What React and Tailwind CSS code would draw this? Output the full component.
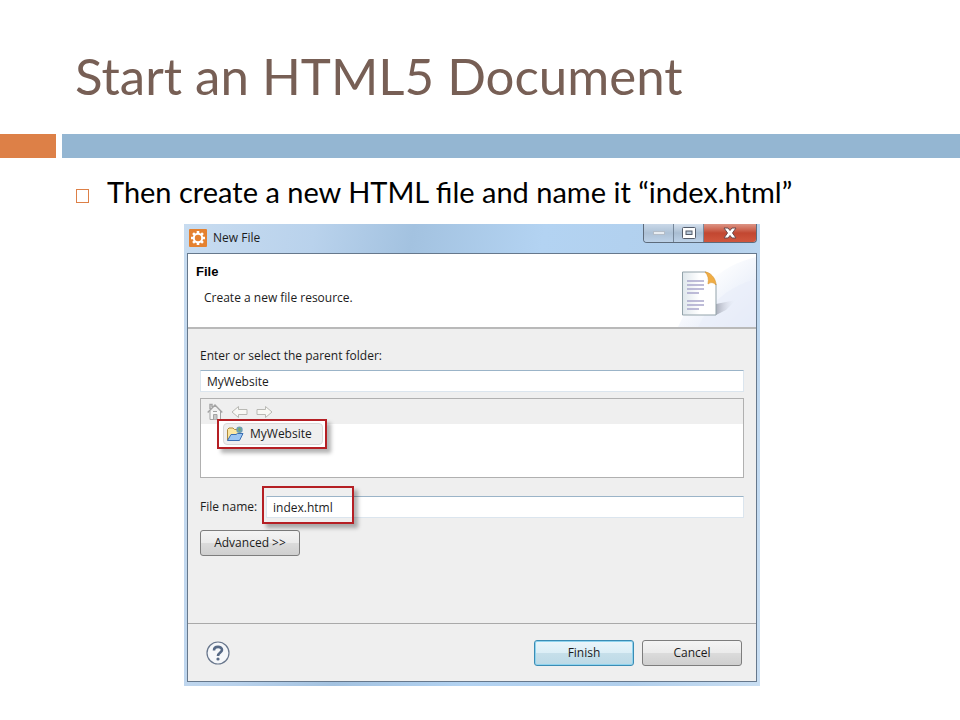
import React, { useState } from 'react';

function GearIcon() {
  return (
    <svg className="h-[18px] w-[18px]" viewBox="0 0 18 18" aria-hidden="true">
      <rect width="18" height="18" rx="1" fill="#e5812f" />
      <path d="M9 2V16M2 9H16M4.050 4.050L13.950 13.950M13.950 4.050L4.050 13.950" stroke="#fff" strokeWidth="2.600" />
      <circle cx="9" cy="9" r="5.200" fill="#fff" />
      <circle cx="9" cy="9" r="3.200" fill="#e5812f" />
    </svg>
  );
}

function PageArt() {
  return (
    <svg className="h-[73px] w-[130px]" viewBox="0 0 130 73" aria-hidden="true">
      <defs>
        <linearGradient id="sky" x1="0" y1="0" x2="1" y2="1">
          <stop offset="0.3" stopColor="#fff" />
          <stop offset="1" stopColor="#dbe4f6" />
        </linearGradient>
        <linearGradient id="sheet" x1="0" y1="0" x2="1" y2="0">
          <stop offset="0" stopColor="#dfe7ec" />
          <stop offset="0.5" stopColor="#fff" />
        </linearGradient>
        <linearGradient id="shade" x1="0" y1="0" x2="1" y2="0">
          <stop offset="0" stopColor="#a9adba" />
          <stop offset="1" stopColor="#e8ecf6" stopOpacity="0" />
        </linearGradient>
      </defs>
      <path d="M52 73C68 38 92 12 130 3V73Z" fill="url(#sky)" />
      <path d="M72 73C84 48 104 32 130 25V73Z" fill="#e9eefa" opacity="0.7" />
      <path d="M90 50L110 46L100 56L90 61Z" fill="url(#shade)" />
      <path d="M56.500 18H80L90 30V61H56.500Z" fill="url(#sheet)" stroke="#93a3aa" />
      <path d="M79 18C84 18 90 24 90 31C87 28 85 28 82 30C83 25 82 21 79 18Z" fill="#f0ad45" stroke="#d9962f" strokeWidth="0.6" />
      <path d="M61 27H78M61 31H78M61 35H78M61 39H73M61 47H78M61 51H78M61 55H73" stroke="#a9a6cc" strokeWidth="1.6" />
    </svg>
  );
}

function HomeIcon() {
  return (
    <svg className="h-[18px] w-4" viewBox="0 0 16 18" fill="none" stroke="#a3a3a3" aria-hidden="true">
      <path d="M3 8V16.500H13.500V8" fill="#f7f7f7" />
      <path d="M3 6V1.500H5V4M0.700 9.500L8 2L15.300 9.500" strokeWidth="1.400" />
      <path d="M6.500 16.500V11.500H10V16.500M6 8.500H10" fill="#c8c8c8" />
    </svg>
  );
}

function ArrowIcon({ flip }) {
  return (
    <svg className={`h-3.5 w-[17px] ${flip ? '-scale-x-100' : ''}`} viewBox="0 0 17 14" aria-hidden="true">
      <path d="M1 7L7.500 1.500V4.500H16V9.500H7.500V12.500Z" fill="#f8f8f4" stroke="#b9b9b4" strokeLinejoin="round" />
    </svg>
  );
}

function FolderIcon() {
  return (
    <svg className="h-4 w-[18px]" viewBox="0 0 18 16" aria-hidden="true">
      <path d="M1.500 14V3.500L3 2H7L8.500 3.500H14V13Z" fill="#fbe7a2" stroke="#b08b3c" />
      <circle cx="13.500" cy="3.800" r="3.200" fill="#6d9fb5" />
      <path d="M12 2.500L14 1.500L15 4L13 5.500Z" fill="#79ab6a" />
      <path d="M1.500 14.500L5 8.500H10L11.500 7.500H17L13.500 14.500Z" fill="#9cc6f3" stroke="#3a6fb4" />
    </svg>
  );
}

function TitleBar() {
  return (
    <div className="relative flex h-[29px] items-start justify-between overflow-hidden">
      {/* Glass smudges from the window behind */}
      <svg className="absolute top-0 left-0 h-full w-full" preserveAspectRatio="none" viewBox="0 0 570 29" aria-hidden="true">
        <defs>
          <filter id="soft" x="-20%" y="-200%" width="140%" height="500%">
            <feGaussianBlur stdDeviation="2" />
          </filter>
        </defs>
        <path d="M36 0H50M62 0H72M92 0H104M118 0H128M188 0H202M210 0H220M230 0H242M252 0H262" stroke="#6f8698" strokeWidth="4" opacity="0.5" filter="url(#soft)" />
      </svg>
      <div className="relative flex h-[27px] items-center gap-1.5 pl-0.5">
        <GearIcon />
        <span className="text-xs leading-4">New File</span>
      </div>
      <div className="relative flex h-[19px] overflow-hidden rounded-b border border-t-0 border-[#5d6b7b]">
        <button type="button" aria-label="Minimize" className="flex w-[30px] items-center justify-center border-r border-[#76879a] bg-linear-to-b from-[#c9d8e8] via-[#adc1d6] to-[#bdd2e8]">
          <span className="h-1 w-3 border border-[#b4bdc8] bg-[#e8edf2]" />
        </button>
        <button type="button" aria-label="Maximize" className="flex w-[30px] items-center justify-center border-r border-[#76879a] bg-linear-to-b from-[#d5e1ee] via-[#a9bdd2] to-[#bdd2e8]">
          <svg className="h-3 w-[14px]" viewBox="0 0 14 12" aria-hidden="true">
            <rect x="0.500" y="0.500" width="13" height="11" rx="1" fill="#fff" stroke="#555d6b" />
            <rect x="4" y="4" width="6" height="3.500" fill="#b9c9da" stroke="#555d6b" />
          </svg>
        </button>
        <button type="button" aria-label="Close" className="flex w-[52px] items-center justify-center bg-linear-to-b from-[#dc9485] via-[#c24731] to-[#d0563d]">
          <svg className="h-3 w-3.5" viewBox="0 0 14 12" aria-hidden="true">
            <path d="M1 1H5L7 3.500L9 1H13L9.500 6L13 11H9L7 8.500L5 11H1L4.500 6Z" fill="#fff" stroke="#6a4a4d" />
          </svg>
        </button>
      </div>
    </div>
  );
}

const buttonBase = 'h-[26px] w-[100px] rounded-[3px] border text-xs leading-4';
const greyButton = 'border-[#7d7d7d] bg-[linear-gradient(#f4f4f4_0%,#ebebeb_48%,#dbdbdb_52%,#cfcfcf_100%)]';
const inputBase = 'h-[22px] w-full border border-[#dbe5ee] border-t-[#9bb4c8] bg-white px-1.5 text-xs leading-4 outline-none';
const callout = 'border-2 border-[#b51f24] shadow-[4px_4px_4px_rgba(0,0,0,0.3)]';

function NewFileDialog() {
  const [folder, setFolder] = useState('MyWebsite');
  const [fileName, setFileName] = useState('index.html');

  return (
    <section
      aria-label="New File"
      className="w-3/5 shrink-0 bg-[linear-gradient(100deg,#c8dcf0_0%,#b9d2ec_20%,#a3c2e0_35%,#b3d3f2_55%,#b1cfec_80%,#c9def2_100%)] px-[3px] pb-1 font-['Open_Sans','Noto_Sans',sans-serif] text-[#1c1c1c]"
    >
      <TitleBar />
      <form onSubmit={(e) => e.preventDefault()} className="border border-[#66788c] bg-[#efefef]">
        {/* Wizard header */}
        <div className="flex h-[75px] justify-between border-b-2 border-[#b9b9b9] bg-white">
          <div className="pt-2.5 pl-2">
            <h2 className="font-['Liberation_Sans',Arial,sans-serif] text-[13px] leading-4 font-bold text-black">File</h2>
            <p className="mt-2.5 pl-2 text-xs leading-4">Create a new file resource.</p>
          </div>
          <PageArt />
        </div>

        {/* Fields */}
        <div className="h-[294px] px-3 pt-[19px]">
          <label htmlFor="folder" className="block text-xs leading-4">Enter or select the parent folder:</label>
          <input id="folder" value={folder} onChange={(e) => setFolder(e.target.value)} className={`mt-1.5 block ${inputBase}`} />

          <div className="relative mt-1.5 h-20 border border-[#b0b0b0] bg-white">
            <div className="flex h-[25px] items-center gap-2 bg-[#efefef] pl-1.5">
              <button type="button" aria-label="Home"><HomeIcon /></button>
              <button type="button" aria-label="Back"><ArrowIcon /></button>
              <button type="button" aria-label="Forward"><ArrowIcon flip /></button>
            </div>
            <div className={`absolute top-5 left-4 bg-white p-0.5 pl-1 ${callout}`}>
              <button type="button" className="flex h-[22px] w-[100px] items-center gap-1.5 rounded-sm border border-[#d9d9d9] bg-[#efefef] pl-0.5 text-xs leading-4">
                <FolderIcon />
                MyWebsite
              </button>
            </div>
          </div>

          <div className="mt-[18px] flex items-center">
            <label htmlFor="file-name" className="w-[66px] shrink-0 text-xs leading-4">File name:</label>
            <div className="relative flex-1">
              <input id="file-name" value={fileName} onChange={(e) => setFileName(e.target.value)} className={`block ${inputBase}`} />
              <span className={`pointer-events-none absolute -top-2.5 -left-1 h-[38px] w-[92px] ${callout}`} />
            </div>
          </div>

          <button type="button" className={`mt-3 ${buttonBase} ${greyButton}`}>Advanced &gt;&gt;</button>
        </div>

        {/* Footer */}
        <div className="flex h-[58px] items-center justify-between border-t border-[#a9a9a9] pr-3.5 pl-[18px]">
          <button type="button" aria-label="Help">
            <svg className="h-6 w-6" viewBox="0 0 24 24" fill="none" aria-hidden="true">
              <circle cx="12" cy="12" r="11" fill="#f5f7fa" stroke="#68768c" strokeWidth="1.200" />
              <path d="M8 9.500C8 4.800 16 4.800 16 9C16 11.500 12 11.500 12 15" stroke="#566986" strokeWidth="2.600" />
              <circle cx="12" cy="18" r="1.600" fill="#566986" />
            </svg>
          </button>
          <div className="flex gap-2">
            <button type="submit" className={`${buttonBase} border-[#3b8cb4] bg-[linear-gradient(#eaf5fa_0%,#dceef6_48%,#c6dfea_52%,#bcd9e6_100%)] ring-1 ring-[#8fd3ee] ring-inset`}>Finish</button>
            <button type="button" className={`${buttonBase} ${greyButton}`}>Cancel</button>
          </div>
        </div>
      </form>
    </section>
  );
}

export default function App() {
  return (
    <main className="min-h-screen bg-white font-[Lato,sans-serif]">
      <h1 className="pt-10 pl-[75px] text-[51px] leading-[72px] text-[#775f55]">Start an HTML5 Document</h1>
      <div className="mt-[22px] flex h-6 gap-1.5">
        <div className="w-14 bg-[#dd8047]" />
        <div className="flex-1 bg-[#94b6d2]" />
      </div>
      <ul className="mt-[18px] pl-[76px]">
        <li className="flex items-center gap-[18px] text-[29px] leading-8 text-black">
          <span className="mt-2 h-3.5 w-[13px] border border-[#dd8047]" />
          Then create a new HTML file and name it “index.html”
        </li>
      </ul>
      <div className="mt-4 flex">
        <div className="w-[184px] shrink-0" />
        <NewFileDialog />
      </div>
    </main>
  );
}
